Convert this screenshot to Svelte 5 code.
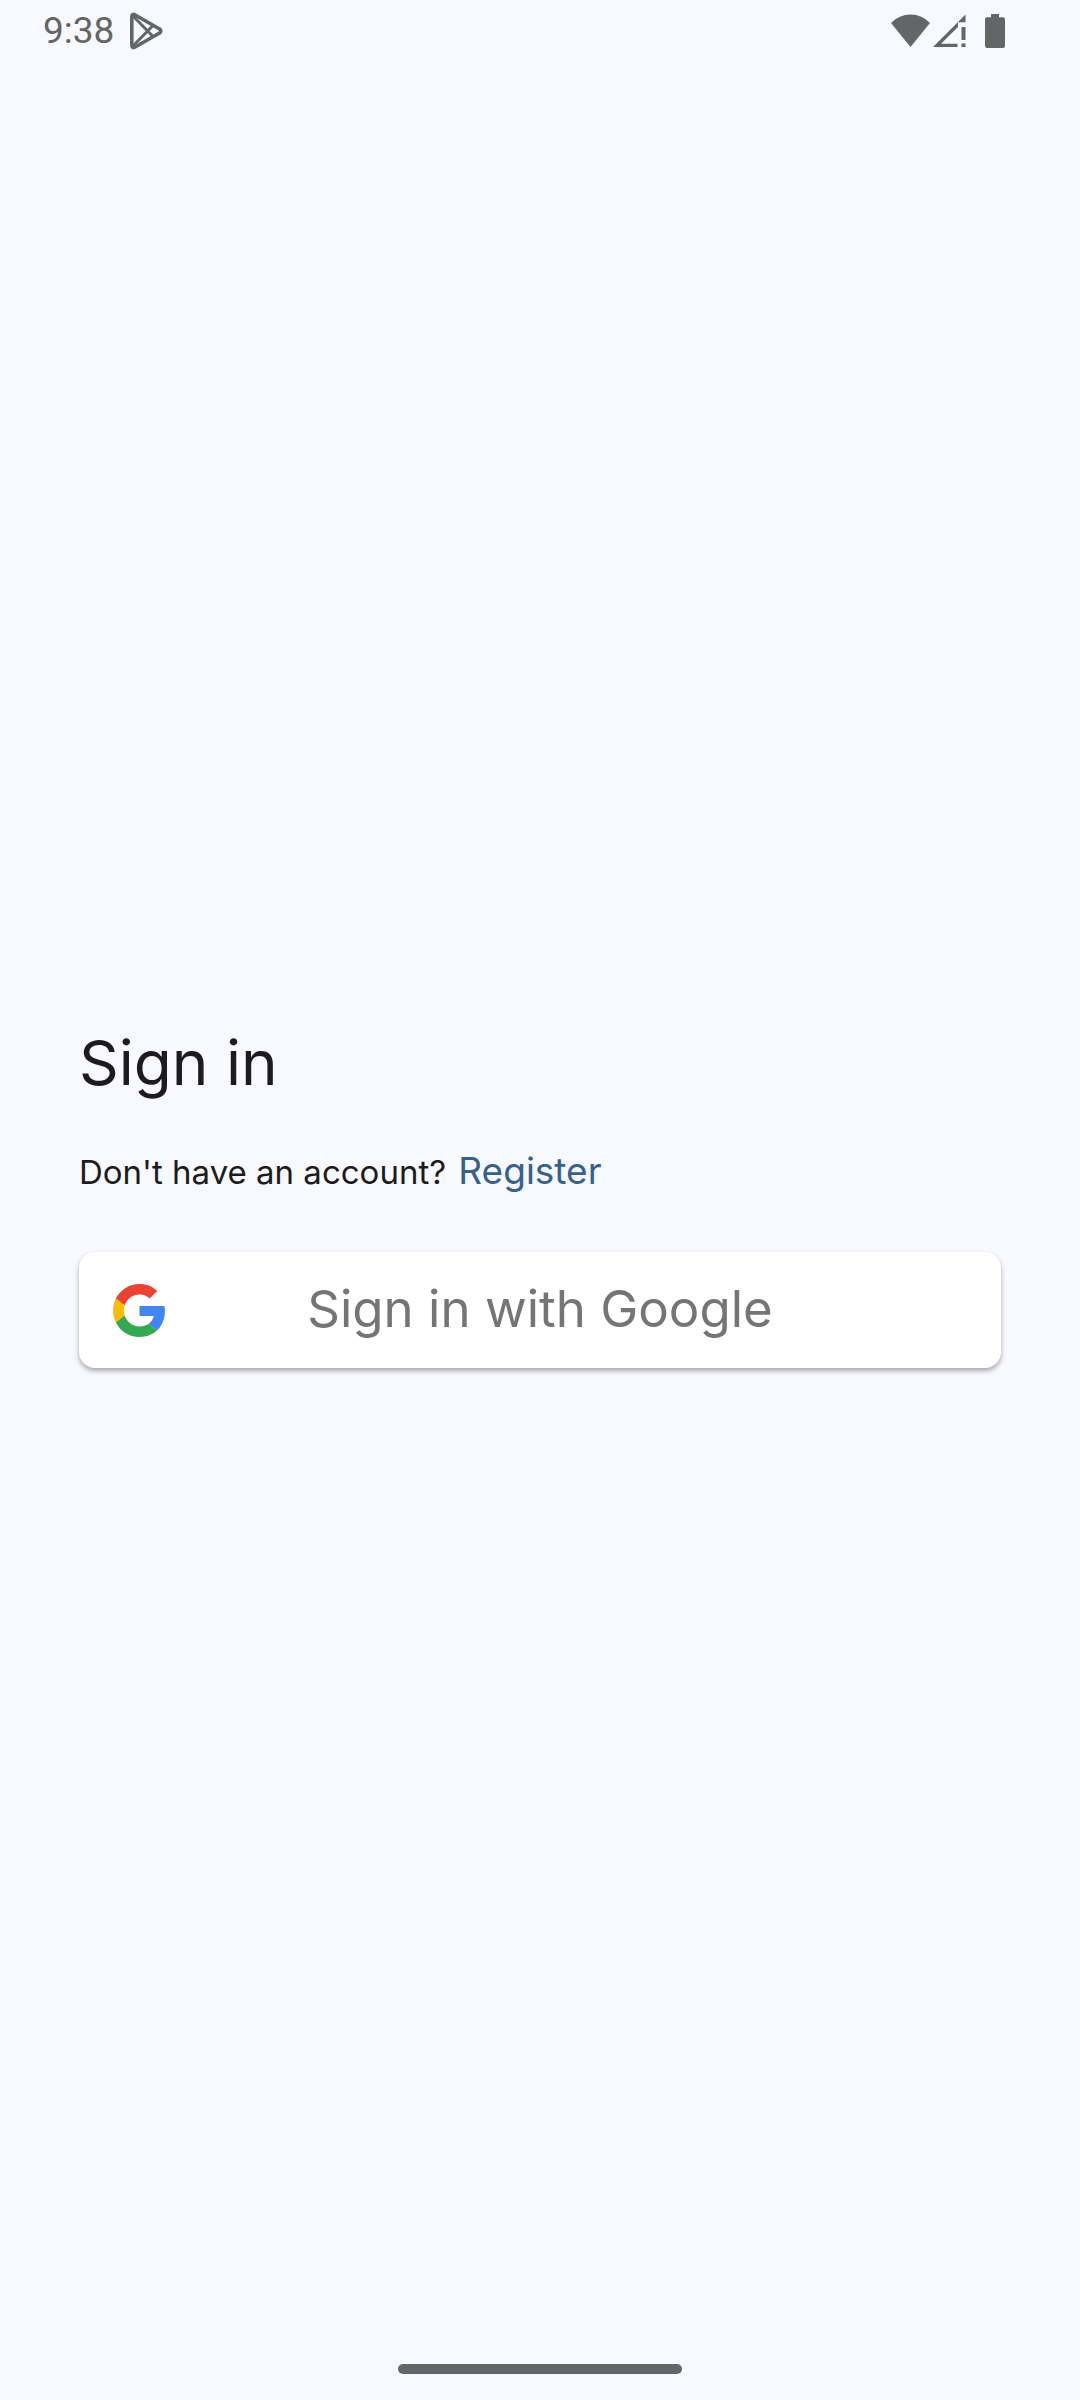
<script>
  const time = '9:38';
</script>

<div class="screen">
  <header class="status-bar">
    <div class="group">
      <span class="time">{time}</span>
      <svg class="play" viewBox="0 0 34 38" aria-hidden="true">
        <g fill="none" stroke="#636567" stroke-linejoin="round">
          <path stroke-width="3.6" d="M2.8 5 V33 Q2.8 36.8 6.2 35 L30.6 21 Q33 19 30.6 17 L6.2 3 Q2.8 1.2 2.8 5Z" />
          <path stroke-width="3" d="M3.5 3.5 L24.5 25 M3.5 34.5 L24.5 13" />
        </g>
      </svg>
    </div>
    <div class="group icons">
      <svg class="wifi" viewBox="0 0 39 34" aria-hidden="true">
        <path fill="#636567" d="M0 9 Q8 0.5 19.500 0.500 Q31 0.500 39 9 L19.500 33Z" />
      </svg>
      <svg class="signal" viewBox="0 0 33 34" aria-hidden="true">
        <path fill="#636567" fill-rule="evenodd" d="M0 33 L32.500 0.500 V8.300 H25 V13 L8 29.800 H24.500 V33Z M28.500 13 H32.500 V26 H28.500Z M28.500 29.500 H32.500 V33 H28.500Z" />
      </svg>
      <svg class="battery" viewBox="0 0 20 34" aria-hidden="true">
        <path fill="#636567" d="M6 0 H14 V3.300 H18 Q20 3.300 20 5.300 V32 Q20 34 18 34 H2 Q0 34 0 32 V5.300 Q0 3.300 2 3.300 H6Z" />
      </svg>
    </div>
  </header>

  <main>
    <h1>Sign in</h1>
    <p>Don't have an account? <a href="#register">Register</a></p>
    <button type="button">
      <svg viewBox="0 0 48 48" aria-hidden="true">
        <path fill="#EA4335" d="M24 9.500c3.540 0 6.710 1.220 9.210 3.600l6.850-6.850C35.900 2.380 30.470 0 24 0 14.620 0 6.510 5.380 2.560 13.220l7.980 6.190C12.430 13.720 17.740 9.500 24 9.500z" />
        <path fill="#4285F4" d="M46.980 24.550c0-1.570-.15-3.090-.38-4.550H24v9.020h12.940c-.58 2.960-2.260 5.480-4.780 7.180l7.730 6c4.510-4.180 7.090-10.360 7.090-17.650z" />
        <path fill="#FBBC05" d="M10.530 28.590c-.48-1.450-.76-2.990-.76-4.590s.27-3.140.76-4.590l-7.980-6.190C.92 16.460 0 20.120 0 24c0 3.880.92 7.540 2.560 10.780l7.970-6.190z" />
        <path fill="#34A853" d="M24 48c6.480 0 11.930-2.130 15.890-5.810l-7.730-6c-2.150 1.450-4.920 2.300-8.160 2.300-6.260 0-11.570-4.220-13.470-9.910l-7.980 6.190C6.510 42.620 14.620 48 24 48z" />
      </svg>
      <span>Sign in with Google</span>
    </button>
  </main>

  <footer><div class="handle"></div></footer>
</div>

<style>
  :global(body) {
    background: #f8f9ff;
  }

  .screen {
    display: flex;
    flex-direction: column;
    min-height: 100vh;
    font-family: Inter, 'Liberation Sans', sans-serif;
    color: #1d1b20;
  }

  .status-bar {
    display: flex;
    align-items: center;
    justify-content: space-between;
    height: 62px;
    padding: 0 75px 0 43px;
    color: #636567;
  }

  .group {
    display: flex;
    align-items: center;
    gap: 15px;
  }

  .time {
    font-family: Roboto, 'Liberation Sans', sans-serif;
    font-size: 37px;
    line-height: 48px;
  }

  .icons {
    gap: 3px;
  }

  .play {
    width: 34px;
    height: 38px;
  }

  .wifi {
    width: 39px;
    height: 34px;
  }

  .signal {
    width: 33px;
    height: 34px;
  }

  .battery {
    width: 20px;
    height: 34px;
    margin-left: 16px;
  }

  main {
    display: flex;
    flex: 1;
    flex-direction: column;
    justify-content: center;
    padding: 0 79px 12px;
  }

  h1 {
    margin: 0;
    font-size: 62px;
    font-weight: 400;
    line-height: 86px;
  }

  p {
    margin: 38px 0 52px;
    font-size: 33px;
    line-height: 56px;
  }

  a {
    margin-left: 3px;
    font-size: 37px;
    line-height: 1;
    color: #36618e;
    text-decoration: none;
  }

  button {
    display: grid;
    grid-template-columns: 52px 1fr 52px;
    align-items: center;
    height: 116px;
    padding: 0 34px;
    border: 0;
    border-radius: 16px;
    background: #fff;
    box-shadow: 0 3px 5px rgb(0 0 0 / 32%);
    color: #757575;
    font-family: inherit;
    font-size: 51px;
    cursor: pointer;
  }

  button span {
    padding-bottom: 4px;
  }

  button svg {
    width: 53px;
    height: 53px;
  }

  footer {
    display: flex;
    align-items: center;
    justify-content: center;
    height: 62px;
  }

  .handle {
    width: 284px;
    height: 10px;
    border-radius: 5px;
    background: #636567;
  }
</style>
